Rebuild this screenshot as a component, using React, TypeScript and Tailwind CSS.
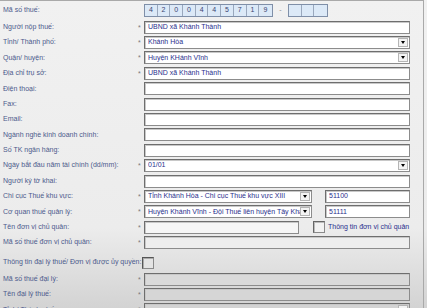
import type { ReactNode } from "react";

const font = { fontFamily: '"Liberation Sans", "DejaVu Sans", sans-serif' };

function Box({ children, className = "" }: { children?: ReactNode; className?: string }) {
  return (
    <div
      className={`flex h-[13px] items-center overflow-hidden border border-[#8c8c8c] border-t-[#6e6e6e] border-l-[#6e6e6e] pl-[3px] text-[7px] whitespace-nowrap text-[#2a2f8c] shadow-[inset_1px_1px_0_#c8c8c8] ${className}`}
    >
      {children}
    </div>
  );
}

function Select({ value, className = "" }: { value?: string; className?: string }) {
  return (
    <Box className={`bg-white pr-[1px] ${className}`}>
      <span className="flex-1 overflow-hidden">{value}</span>
      <span className="flex h-[9px] w-[10px] shrink-0 items-center justify-center border border-[#b5b5b5] bg-[#f3f3f3]">
        <span className="h-0 w-0 border-x-[2.5px] border-t-[3px] border-x-transparent border-t-black" />
      </span>
    </Box>
  );
}

function Row({
  label,
  star = true,
  children,
}: {
  label: string;
  star?: boolean;
  children?: ReactNode;
}) {
  return (
    <div className="flex h-[15.4px] items-center">
      <div className="w-[138px] shrink-0 whitespace-nowrap pl-[3px] text-[7px] text-[#4c5a8c]">{label}</div>
      <div className="w-[6px] shrink-0 text-[7px] leading-none text-[#7a7a7a]">{star ? "*" : ""}</div>
      <div className="w-[266px] shrink-0">{children}</div>
    </div>
  );
}

const digits = ["4", "2", "0", "0", "4", "4", "5", "7", "1", "9"];

export default function App() {
  return (
    <div
      style={font}
      className="relative h-[308px] w-[427px] overflow-hidden bg-[linear-gradient(to_bottom,#f1f1f1_0%,#ececec_74%,#d3d3d3_100%)]"
    >
      <div className="h-[308px] w-[424px] border-t border-r border-[#a9a9a9] pt-[2px]">
        {/* ma so thue */}
        <div className="flex h-[15px] items-center">
          <div className="w-[144px] shrink-0 pl-[3px] text-[7px] text-[#4c5a8c]">Mã số thuế:</div>
          <div className="flex h-[13px] border border-[#7f8fa8] bg-[#dce9f7]">
            {digits.map((d, i) => (
              <div
                key={i}
                className="flex w-[12.7px] items-center justify-center border-r border-[#9aa8bd] text-[7px] text-[#3a4470] last:border-r-0"
              >
                {d}
              </div>
            ))}
          </div>
          <div className="w-[15px] text-center text-[7px] text-[#888]">-</div>
          <div className="flex h-[13px] border border-[#7f8fa8] bg-[#dce9f7]">
            {[0, 1, 2].map((i) => (
              <div key={i} className="w-[12.8px] border-r border-[#9aa8bd] last:border-r-0" />
            ))}
          </div>
        </div>

        <div className="pt-[1.5px]">
          <Row label="Người nộp thuế:">
            <Box className="bg-white">UBND xã Khánh Thành</Box>
          </Row>
          <Row label="Tỉnh/ Thành phố:">
            <Select value="Khánh Hòa" />
          </Row>
          <Row label="Quận/ huyện:">
            <Select value="Huyện KHánh Vĩnh" />
          </Row>
          <Row label="Địa chỉ trụ sở:">
            <Box className="bg-white">UBND xã Khánh Thành</Box>
          </Row>
          <Row label="Điện thoại:" star={false}>
            <Box className="bg-white" />
          </Row>
          <Row label="Fax:" star={false}>
            <Box className="bg-white" />
          </Row>
          <Row label="Email:" star={false}>
            <Box className="bg-white" />
          </Row>
          <Row label="Ngành nghề kinh doanh chính:" star={false}>
            <Box className="bg-white" />
          </Row>
          <Row label="Số TK ngân hàng:" star={false}>
            <Box className="bg-white" />
          </Row>
          <Row label="Ngày bắt đầu năm tài chính (dd/mm):">
            <Select value="01/01" />
          </Row>
          <Row label="Người ký tờ khai:" star={false}>
            <Box className="bg-white" />
          </Row>
          <Row label="Chi cục Thuế khu vực:">
            <div className="flex gap-[13px]">
              <Select value="Tỉnh Khánh Hòa - Chi cục Thuế khu vực XIII" className="w-[168px]" />
              <Box className="flex-1 bg-white">51100</Box>
            </div>
          </Row>
          <Row label="Cơ quan thuế quản lý:">
            <div className="flex gap-[13px]">
              <Select value="Huyện Khánh Vĩnh - Đội Thuế liên huyện Tây Khánh" className="w-[168px]" />
              <Box className="flex-1 bg-white">51111</Box>
            </div>
          </Row>
          <Row label="Tên đơn vị chủ quản:">
            <div className="flex items-center">
              <Box className="w-[155px] bg-[#f6f6f6]" />
              <div className="ml-[14px] h-[12px] w-[12px] border border-[#8a8a8a] border-t-[#666] border-l-[#666] bg-[#f2f2f2] shadow-[inset_1px_1px_0_#bbb]" />
              <span className="ml-[3px] whitespace-nowrap text-[7px] text-[#2a2f8c]">Thông tin đơn vị chủ quản</span>
            </div>
          </Row>
          <Row label="Mã số thuế đơn vị chủ quản:">
            <Box className="bg-[#eeeeee]" />
          </Row>

          <div className="flex h-[20px] items-end pb-[1px]">
            <div className="w-[142px] shrink-0 whitespace-nowrap pl-[3px] pb-[2px] text-[7px] text-[#4c5a8c]">
              Thông tin đại lý thuế/ Đơn vị được ủy quyền:
            </div>
            <div className="h-[12px] w-[12px] border border-[#8a8a8a] border-t-[#555] border-l-[#555] bg-[#e4e4e4] shadow-[inset_1px_1px_0_#aaa]" />
          </div>

          <div className="pt-[1px]">
            <Row label="Mã số thuế đại lý:">
              <Box className="bg-[#dadada]" />
            </Row>
            <Row label="Tên đại lý thuế:">
              <Box className="bg-[#d6d6d6]" />
            </Row>
            <Row label="Tỉnh/ Thành phố:">
              <Select className="!bg-[#d3d3d3]" />
            </Row>
          </div>
        </div>
      </div>
    </div>
  );
}
